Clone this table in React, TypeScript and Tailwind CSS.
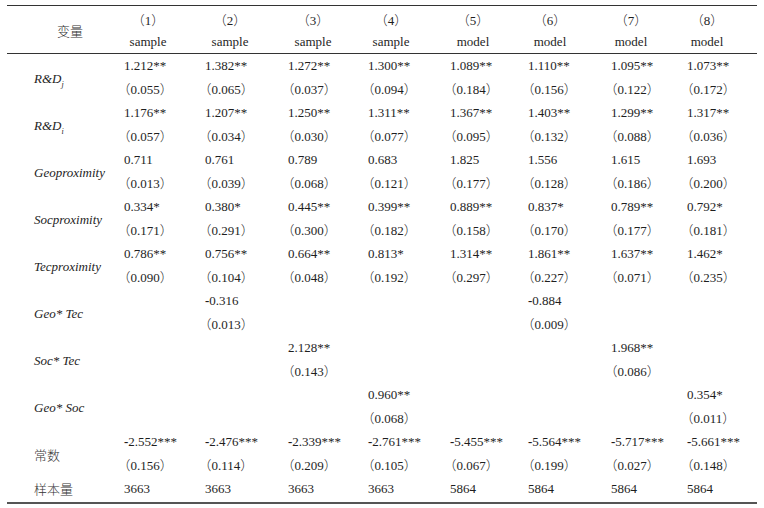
import React from "react";

type Row = {
  label: React.ReactNode;
  vals: (string | null)[];
  se?: (string | null)[];
};

const gridCols =
  "grid grid-cols-[117px_81px_83px_80px_82px_78px_83px_76px_70px]";

const headWidths = [
  "w-[48px]",
  "w-[50px]",
  "w-[50px]",
  "w-[46px]",
  "w-[46px]",
  "w-[44px]",
  "w-[40px]",
  "w-[40px]",
];

const N = null;

const cjk = "font-['Noto_Sans_CJK_SC',sans-serif] font-light text-[#333]";

const rows: Row[] = [
  {
    label: (
      <span className="italic">
        R&amp;D<sub className="text-[8px] italic align-[-2px]">j</sub>
      </span>
    ),
    vals: ["1.212**", "1.382**", "1.272**", "1.300**", "1.089**", "1.110**", "1.095**", "1.073**"],
    se: ["0.055", "0.065", "0.037", "0.094", "0.184", "0.156", "0.122", "0.172"],
  },
  {
    label: (
      <span className="italic">
        R&amp;D<sub className="text-[8px] italic align-[-2px]">i</sub>
      </span>
    ),
    vals: ["1.176**", "1.207**", "1.250**", "1.311**", "1.367**", "1.403**", "1.299**", "1.317**"],
    se: ["0.057", "0.034", "0.030", "0.077", "0.095", "0.132", "0.088", "0.036"],
  },
  {
    label: <span className="italic">Geoproximity</span>,
    vals: ["0.711", "0.761", "0.789", "0.683", "1.825", "1.556", "1.615", "1.693"],
    se: ["0.013", "0.039", "0.068", "0.121", "0.177", "0.128", "0.186", "0.200"],
  },
  {
    label: <span className="italic">Socproximity</span>,
    vals: ["0.334*", "0.380*", "0.445**", "0.399**", "0.889**", "0.837*", "0.789**", "0.792*"],
    se: ["0.171", "0.291", "0.300", "0.182", "0.158", "0.170", "0.177", "0.181"],
  },
  {
    label: <span className="italic">Tecproximity</span>,
    vals: ["0.786**", "0.756**", "0.664**", "0.813*", "1.314**", "1.861**", "1.637**", "1.462*"],
    se: ["0.090", "0.104", "0.048", "0.192", "0.297", "0.227", "0.071", "0.235"],
  },
  {
    label: <span className="italic">Geo* Tec</span>,
    vals: [N, "-0.316", N, N, N, "-0.884", N, N],
    se: [N, "0.013", N, N, N, "0.009", N, N],
  },
  {
    label: <span className="italic">Soc* Tec</span>,
    vals: [N, N, "2.128**", N, N, N, "1.968**", N],
    se: [N, N, "0.143", N, N, N, "0.086", N],
  },
  {
    label: <span className="italic">Geo* Soc</span>,
    vals: [N, N, N, "0.960**", N, N, N, "0.354*"],
    se: [N, N, N, "0.068", N, N, N, "0.011"],
  },
  {
    label: <span className={cjk}>常数</span>,
    vals: ["-2.552***", "-2.476***", "-2.339***", "-2.761***", "-5.455***", "-5.564***", "-5.717***", "-5.661***"],
    se: ["0.156", "0.114", "0.209", "0.105", "0.067", "0.199", "0.027", "0.148"],
  },
];

function Paren({ children }: { children: React.ReactNode }) {
  return (
    <span>
      <span className="[font-feature-settings:'halt'] font-['Noto_Sans_CJK_SC',sans-serif] font-light">（</span>
      {children}
      <span className="[font-feature-settings:'halt'] font-['Noto_Sans_CJK_SC',sans-serif] font-light">）</span>
    </span>
  );
}

function Val({ v }: { v: string }) {
  if (v.startsWith("-")) {
    return (
      <span>
        <span className="font-bold">-</span>
        {v.slice(1)}
      </span>
    );
  }
  return <span>{v}</span>;
}

export default function App() {
  return (
    <div className="w-[764px] h-[508px] bg-white pt-[5px] px-[7px] text-[13px] text-[#1e1e1e] font-['Liberation_Serif','Noto_Sans_CJK_SC',serif]">
      <div className="border-t border-[#333]">
        {/* Header */}
        <div className={`${gridCols} pt-[3px] border-b border-[#333]`}>
          <div className="flex items-center pl-[50px]">
            <span className={cjk}>变量</span>
          </div>
          {[1, 2, 3, 4, 5, 6, 7, 8].map((n, i) => (
            <div key={n} className={`${headWidths[i]} flex flex-col items-center`}>
              <div className="h-[22px] leading-[22px] whitespace-nowrap">
                <Paren>{n}</Paren>
              </div>
              <div className="h-[22px] leading-[22px] whitespace-nowrap">
                {i < 4 ? "sample" : "model"}
              </div>
            </div>
          ))}
        </div>

        {/* Body */}
        <div className="pt-[1px] pb-[2px] border-b-2 border-[#555]">
          {rows.map((r, ri) => (
            <div key={ri} className={`${gridCols} h-[47px]`}>
              <div className="flex items-center pl-[27px] whitespace-nowrap">{r.label}</div>
              {r.vals.map((v, ci) => (
                <div key={ci} className="flex flex-col gap-[1px] whitespace-nowrap">
                  <div className="h-[22px] leading-[22px]">{v ? <Val v={v} /> : null}</div>
                  <div className="h-[22px] leading-[22px]">
                    {r.se && r.se[ci] ? <Paren>{r.se[ci]}</Paren> : null}
                  </div>
                </div>
              ))}
            </div>
          ))}
          <div className={`${gridCols} h-[22px]`}>
            <div className="flex items-center pl-[27px] whitespace-nowrap">
              <span className={cjk}>样本量</span>
            </div>
            {["3663", "3663", "3663", "3663", "5864", "5864", "5864", "5864"].map((v, i) => (
              <div key={i} className="h-[22px] leading-[22px]">
                {v}
              </div>
            ))}
          </div>
        </div>
      </div>
    </div>
  );
}
